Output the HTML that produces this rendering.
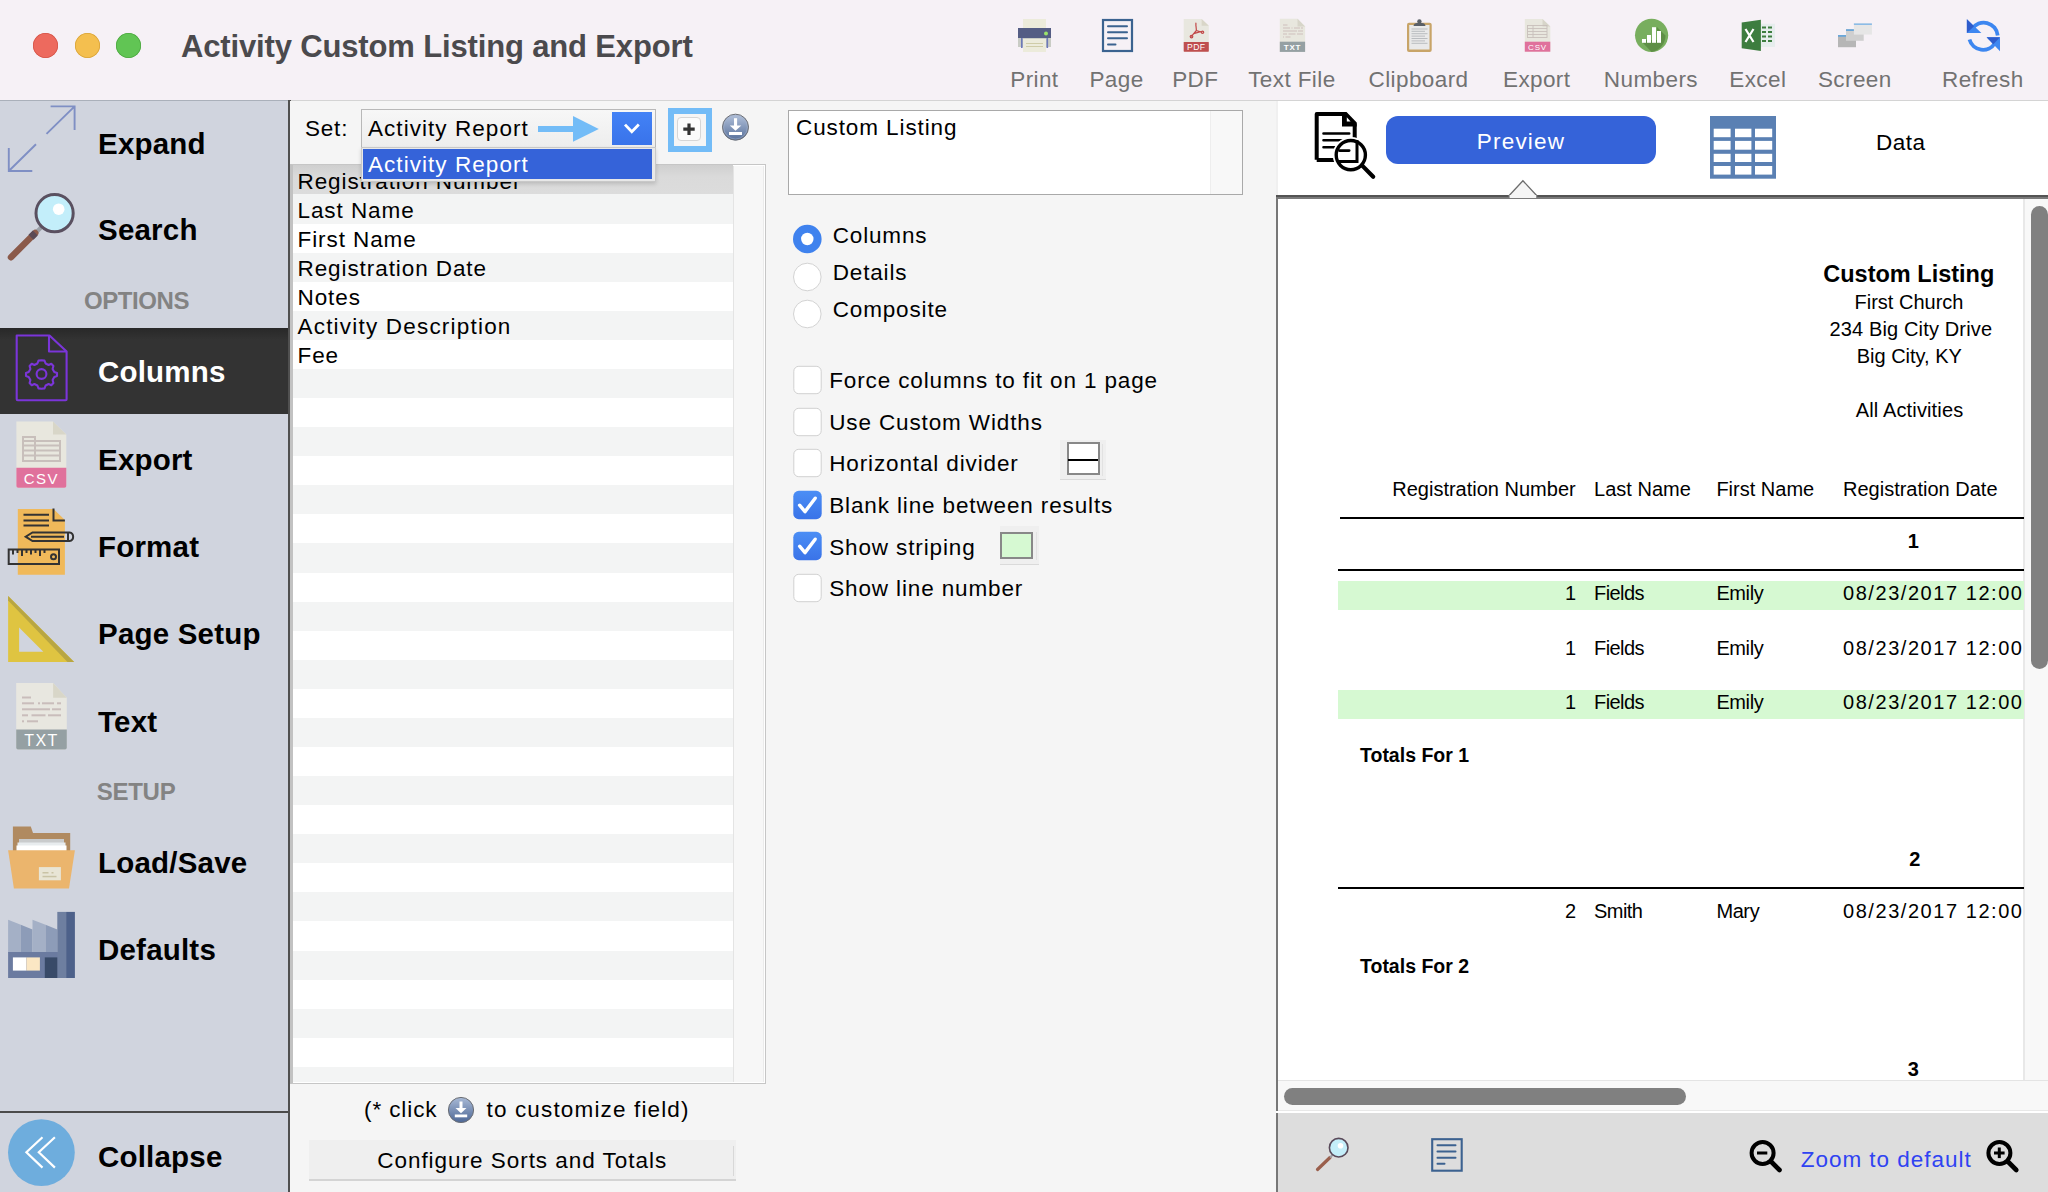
<!DOCTYPE html>
<html><head><meta charset="utf-8"><style>
html,body{margin:0;padding:0;}
body{width:2048px;height:1192px;position:relative;overflow:hidden;background:#f5f5f5;font-family:"Liberation Sans",sans-serif;}
.t{position:absolute;white-space:pre;}
.r{position:absolute;}
</style></head><body>
<div class="r" style="left:0px;top:0px;width:2048px;height:100px;background:#f6f1f6;"></div>
<div class="r" style="left:0px;top:100px;width:288px;height:1.5px;background:#aab0ba;"></div>
<div class="r" style="left:290px;top:100px;width:1758px;height:1.5px;background:#d4d4d4;"></div>
<div class="r" style="left:33.0px;top:33px;width:25px;height:25px;border-radius:50%;background:#ed6a5e;box-shadow:inset 0 0 0 0.8px #d5564a;"></div>
<div class="r" style="left:75.0px;top:33px;width:25px;height:25px;border-radius:50%;background:#f4bf4f;box-shadow:inset 0 0 0 0.8px #d9a43a;"></div>
<div class="r" style="left:116.0px;top:33px;width:25px;height:25px;border-radius:50%;background:#61c554;box-shadow:inset 0 0 0 0.8px #4ea842;"></div>
<div class="t" style="left:181px;top:31.00px;font-size:31px;line-height:31px;color:#4b4a4d;font-weight:bold;letter-spacing:-0.15px;">Activity Custom Listing and Export</div>
<div class="t" style="left:934.4000000000001px;width:200px;text-align:center;top:69.00px;font-size:22.5px;line-height:22.5px;color:#727272;letter-spacing:0.4px;">Print</div>
<div class="t" style="left:1016.5px;width:200px;text-align:center;top:69.00px;font-size:22.5px;line-height:22.5px;color:#727272;letter-spacing:0.4px;">Page</div>
<div class="t" style="left:1095.3px;width:200px;text-align:center;top:69.00px;font-size:22.5px;line-height:22.5px;color:#727272;letter-spacing:0.4px;">PDF</div>
<div class="t" style="left:1191.9px;width:200px;text-align:center;top:69.00px;font-size:22.5px;line-height:22.5px;color:#727272;letter-spacing:0.4px;">Text File</div>
<div class="t" style="left:1318.5px;width:200px;text-align:center;top:69.00px;font-size:22.5px;line-height:22.5px;color:#727272;letter-spacing:0.4px;">Clipboard</div>
<div class="t" style="left:1436.7px;width:200px;text-align:center;top:69.00px;font-size:22.5px;line-height:22.5px;color:#727272;letter-spacing:0.4px;">Export</div>
<div class="t" style="left:1550.9px;width:200px;text-align:center;top:69.00px;font-size:22.5px;line-height:22.5px;color:#727272;letter-spacing:0.4px;">Numbers</div>
<div class="t" style="left:1657.8px;width:200px;text-align:center;top:69.00px;font-size:22.5px;line-height:22.5px;color:#727272;letter-spacing:0.4px;">Excel</div>
<div class="t" style="left:1754.8px;width:200px;text-align:center;top:69.00px;font-size:22.5px;line-height:22.5px;color:#727272;letter-spacing:0.4px;">Screen</div>
<div class="t" style="left:1882.8px;width:200px;text-align:center;top:69.00px;font-size:22.5px;line-height:22.5px;color:#727272;letter-spacing:0.4px;">Refresh</div>
<svg class="r" style="left:1016px;top:17px;" width="38" height="36" viewBox="0 0 38 36">
<rect x="7" y="2" width="23" height="10" fill="#ecebdb"/>
<rect x="2" y="11" width="33" height="10" fill="#545d84"/>
<circle cx="30" cy="16.4" r="2" fill="#9be36a"/>
<rect x="2" y="21" width="33" height="9" fill="#c9ccc5"/>
<rect x="5" y="21" width="1.6" height="10" fill="#6d79b8"/>
<rect x="30.5" y="21" width="1.6" height="10" fill="#6d79b8"/>
<rect x="7" y="22" width="23" height="13" fill="#ecebdb"/>
<rect x="10" y="26" width="17" height="1" fill="#cfcca8"/>
<rect x="10" y="29" width="17" height="1" fill="#cfcca8"/>
</svg>
<svg class="r" style="left:1100px;top:17px;" width="36" height="38" viewBox="0 0 36 38">
<rect x="3" y="3" width="29" height="31" fill="none" stroke="#3b6390" stroke-width="2.2"/>
<rect x="7" y="8.3" width="21" height="2" rx="1" fill="#3b6390"/>
<rect x="7" y="14.3" width="21" height="2" rx="1" fill="#3b6390"/>
<rect x="7" y="20.3" width="21" height="2" rx="1" fill="#3b6390"/>
<rect x="7" y="26.5" width="9.5" height="2" rx="1" fill="#3b6390"/>
</svg>
<svg class="r" style="left:1183px;top:18px;" width="28" height="36" viewBox="0 0 28 36">
<path d="M0.7 1.1 H18.6 L25.8 7.7 V33.7 H0.7 Z" fill="#e8e7df"/>
<path d="M18.6 1.1 L25.8 7.7 H18.6 Z" fill="#d9d6c8"/>
<rect x="0.7" y="24" width="25.1" height="9.7" rx="0.6" fill="#bf4f4f"/>
<text x="13.2" y="31.9" font-size="8.6" font-family="Liberation Sans" fill="#fff" text-anchor="middle" letter-spacing="0.4">PDF</text>
<g stroke="#c24848" stroke-width="1.2" fill="none" stroke-linecap="round">
<path d="M12.9 5.2 V8 M13 8 L13.4 12.5 L8.6 18.2 M13.4 12.5 L19 14.2 M10.8 15.6 L17.5 13.6"/>
<circle cx="8.5" cy="18.6" r="1.3"/><circle cx="19.5" cy="14.3" r="1.2"/>
</g>
</svg>
<svg class="r" style="left:1279px;top:18px;" width="28" height="36" viewBox="0 0 28 36">
<path d="M0.8 0.8 H18.5 L26.1 8.5 V33.9 H0.8 Z" fill="#e8e7de"/>
<path d="M18.5 0.8 L26.1 8.5 H18.5 Z" fill="#d7d5c9"/>
<rect x="0.8" y="23.7" width="25.3" height="10.2" fill="#95a0a3"/>
<text x="13.5" y="32.4" font-size="8" font-family="Liberation Sans" font-weight="bold" fill="#fff" text-anchor="middle" letter-spacing="0.8">TXT</text>
<g fill="#cdbfbc"><rect x="4" y="6.5" width="4.5" height="1"/><rect x="4" y="9.5" width="7" height="1"/><rect x="12.5" y="9.5" width="1" height="1"/><rect x="15" y="9.5" width="6" height="1"/><rect x="22" y="9.5" width="2" height="1"/>
<rect x="4" y="12.5" width="14" height="1"/><rect x="19" y="12.5" width="5" height="1"/><rect x="4" y="15.5" width="4" height="1"/><rect x="9.5" y="15.5" width="7" height="1"/><rect x="18" y="15.5" width="6" height="1"/><rect x="4" y="18.5" width="1" height="1"/><rect x="6.5" y="18.5" width="5" height="1"/></g>
</svg>
<svg class="r" style="left:1405px;top:17px;" width="29" height="37" viewBox="0 0 29 37">
<rect x="2" y="5.8" width="24.7" height="29.1" rx="2" fill="#c8a468"/>
<rect x="4.2" y="8" width="20.3" height="24.5" fill="#e9e9e9"/>
<path d="M8.5 9 Q9 6 12 6 H17 Q20 6 20.5 9 Z" fill="#5a5f66"/>
<circle cx="14.4" cy="4.5" r="2.2" fill="#5a5f66"/>
<g fill="#b9bcbf"><rect x="6.5" y="11.5" width="16" height="1"/><rect x="6.5" y="13.8" width="13.5" height="1"/><rect x="6.5" y="16.2" width="16" height="1"/><rect x="6.5" y="18.6" width="13.5" height="1"/><rect x="6.5" y="21" width="16" height="1"/><rect x="6.5" y="23.4" width="13.5" height="1"/><rect x="6.5" y="25.8" width="16" height="1"/></g>
</svg>
<svg class="r" style="left:1524px;top:18px;" width="28" height="36" viewBox="0 0 28 36">
<path d="M0.8 0.9 H18.5 L26.3 8.6 V33.7 H0.8 Z" fill="#e8e7de"/>
<path d="M18.5 0.9 L26.3 8.6 H18.5 Z" fill="#d7d5c9"/>
<rect x="0.8" y="23.7" width="25.5" height="10" fill="#e0719c"/>
<text x="13.5" y="32.2" font-size="8" font-family="Liberation Sans" fill="#fff" text-anchor="middle" letter-spacing="0.8">CSV</text>
<g fill="none" stroke="#c8bfbb" stroke-width="0.9"><rect x="3.5" y="7.5" width="19.5" height="12"/><path d="M9 7.5 V19.5 M3.5 10.5 H23 M3.5 13.5 H23 M3.5 16.5 H23"/></g>
</svg>
<svg class="r" style="left:1634px;top:18px;" width="36" height="36" viewBox="0 0 36 36">
<circle cx="17.6" cy="17.3" r="16.6" fill="#78ae5e"/>
<path d="M8 22 L23 22 L23 9 L31.5 17.5 A16.6 16.6 0 0 1 17.6 33.9 L8 24 Z" fill="#5f8f47"/>
<rect x="8" y="21" width="4" height="3.8" fill="#fff"/>
<rect x="13" y="17" width="4" height="7.8" fill="#fff"/>
<rect x="18" y="9.2" width="4" height="15.6" fill="#fff"/>
<rect x="23" y="13" width="4" height="11.8" fill="#fff"/>
</svg>
<svg class="r" style="left:1740px;top:18px;" width="38" height="36" viewBox="0 0 38 36">
<rect x="19" y="5.7" width="16" height="23.2" fill="#e6eded"/>
<g fill="#3d7d3f"><rect x="22" y="8.5" width="4" height="2"/><rect x="28" y="8.5" width="4" height="2"/><rect x="22" y="13" width="4" height="2"/><rect x="28" y="13" width="4" height="2"/><rect x="22" y="17.5" width="4" height="2"/><rect x="28" y="17.5" width="4" height="2"/><rect x="22" y="22" width="4" height="2"/><rect x="28" y="22" width="4" height="2"/></g>
<path d="M1.7 4.5 L20.9 1.8 V33 L1.7 30.3 Z" fill="#3d7d3f"/>
<path d="M5.5 11 L13.5 24 M13.5 11 L5.5 24" stroke="#fff" stroke-width="2.2"/>
</svg>
<svg class="r" style="left:1836px;top:20px;" width="40" height="30" viewBox="0 0 40 30">
<rect x="2" y="15" width="18" height="12.2" fill="#b6b6b6"/><rect x="2" y="15" width="18" height="1.8" fill="#6aa6d8"/>
<rect x="10" y="9.2" width="17.7" height="11.6" fill="#cfcfcf"/><rect x="10" y="9.2" width="17.7" height="1.8" fill="#6aa6d8"/>
<rect x="17.9" y="3.4" width="18" height="11.2" fill="#e6e6e6"/><rect x="17.9" y="3.4" width="18" height="1.6" fill="#8bbbe6"/>
</svg>
<svg class="r" style="left:1964px;top:17px;" width="40" height="38" viewBox="0 0 40 38">
<path d="M33.7 18.5 A14 14 0 0 0 8 12" fill="none" stroke="#3d87f0" stroke-width="3.8"/>
<path d="M5.5 22.5 A14 14 0 0 0 31 26" fill="none" stroke="#3d87f0" stroke-width="3.8"/>
<path d="M2.9 2.3 V16 H17.4 Z" fill="#3d87f0"/><path d="M2.9 2.3 V16 L10 9.2 Z" fill="#2e5ccc"/>
<path d="M36 34.3 V20.3 H22.6 Z" fill="#3d87f0"/><path d="M36 20.3 H22.6 L29.3 27.2 Z" fill="#2e5ccc"/>
</svg>
<div class="r" style="left:0px;top:101px;width:288px;height:1091px;background:#d0d4de;"></div>
<div class="r" style="left:288px;top:100px;width:2.5px;height:1092px;background:#505050;"></div>
<div class="r" style="left:0px;top:328px;width:288px;height:86px;background:#333333;background:linear-gradient(#282828,#333 12px,#333);"></div>
<div class="r" style="left:0px;top:1111px;width:288px;height:2px;background:#4b4b4b;"></div>
<div class="t" style="left:98px;top:129.00px;font-size:29.5px;line-height:29.5px;color:#000;font-weight:bold;letter-spacing:0.2px;">Expand</div>
<div class="t" style="left:98px;top:215.00px;font-size:29.5px;line-height:29.5px;color:#000;font-weight:bold;letter-spacing:0.2px;">Search</div>
<div class="t" style="left:11.5px;width:250px;text-align:center;top:289.00px;font-size:24px;line-height:24px;color:#838383;font-weight:bold;letter-spacing:-0.4px;">OPTIONS</div>
<div class="t" style="left:98px;top:357.00px;font-size:29.5px;line-height:29.5px;color:#fff;font-weight:bold;letter-spacing:0.2px;">Columns</div>
<div class="t" style="left:98px;top:445.00px;font-size:29.5px;line-height:29.5px;color:#000;font-weight:bold;letter-spacing:0.2px;">Export</div>
<div class="t" style="left:98px;top:532.00px;font-size:29.5px;line-height:29.5px;color:#000;font-weight:bold;letter-spacing:0.2px;">Format</div>
<div class="t" style="left:98px;top:619.00px;font-size:29.5px;line-height:29.5px;color:#000;font-weight:bold;letter-spacing:0.2px;">Page Setup</div>
<div class="t" style="left:98px;top:707.00px;font-size:29.5px;line-height:29.5px;color:#000;font-weight:bold;letter-spacing:0.2px;">Text</div>
<div class="t" style="left:11.099999999999994px;width:250px;text-align:center;top:780.00px;font-size:24px;line-height:24px;color:#838383;font-weight:bold;letter-spacing:-0.3px;">SETUP</div>
<div class="t" style="left:98px;top:848.00px;font-size:29.5px;line-height:29.5px;color:#000;font-weight:bold;letter-spacing:0.2px;">Load/Save</div>
<div class="t" style="left:98px;top:935.00px;font-size:29.5px;line-height:29.5px;color:#000;font-weight:bold;letter-spacing:0.2px;">Defaults</div>
<div class="t" style="left:98px;top:1142.00px;font-size:29.5px;line-height:29.5px;color:#000;font-weight:bold;letter-spacing:0.2px;">Collapse</div>
<svg class="r" style="left:0px;top:100px;" width="90" height="80" viewBox="0 0 90 80">
<g stroke="#7f8fc4" stroke-width="1.9" fill="none" stroke-linecap="butt">
<path d="M46.5 33.9 L74.6 6.4 M50.6 6.4 H74.6 V30"/>
<path d="M36 44.2 L8.8 71 M8.8 48 V71 H32.3"/>
</g></svg>
<svg class="r" style="left:0px;top:180px;" width="90" height="90" viewBox="0 0 90 90">
<path d="M35.5 53 L41.5 47" stroke="#9aa0a8" stroke-width="4"/>
<path d="M11 77.2 L35.2 53" stroke="#8b5a4a" stroke-width="6.5" stroke-linecap="round"/>
<path d="M31 57.3 L35.3 53" stroke="#5b4a55" stroke-width="7"/>
<circle cx="54.6" cy="33.2" r="18.6" fill="#c3eefa" stroke="#5a5060" stroke-width="3"/>
<circle cx="58.7" cy="29.2" r="5.8" fill="#fff"/>
</svg>
<svg class="r" style="left:0px;top:320px;" width="90" height="90" viewBox="0 0 90 90">
<g stroke="#7b35d9" stroke-width="2.1" fill="none" stroke-linejoin="round">
<path d="M16.7 15.5 H49.5 L66.6 31.5 V79.2 Q66.6 80.2 65.6 80.2 H17.7 Q16.7 80.2 16.7 79.2 Z"/>
<path d="M49 15.5 V31.5 H66.6"/>
<circle cx="41.5" cy="54" r="4.9"/>
<path d="M41.5 40.2 L44.5 40.6 L45.6 43.5 L48.6 45 L51.3 43.8 L53.4 46 L52.6 49 L54.3 52 L57 53 L57 56 L54.3 57 L52.6 60 L53.4 63 L51.3 65.2 L48.6 64 L45.6 65.5 L44.5 68.4 L41.5 68.8 L38.5 68.4 L37.4 65.5 L34.4 64 L31.7 65.2 L29.6 63 L30.4 60 L28.7 57 L26 56 L26 53 L28.7 52 L30.4 49 L29.6 46 L31.7 43.8 L34.4 45 L37.4 43.5 L38.5 40.6 Z"/>
</g></svg>
<svg class="r" style="left:0px;top:415px;" width="90" height="80" viewBox="0 0 90 80">
<path d="M16.4 6.4 H53 L66.3 19.5 V71 Q66.3 72.7 64.6 72.7 H18.1 Q16.4 72.7 16.4 71 Z" fill="#e8e7de"/>
<path d="M53 6.4 L66.3 19.5 H53 Z" fill="#d8d6c8"/>
<path d="M16.4 52.8 H66.3 V71 Q66.3 72.7 64.6 72.7 H18.1 Q16.4 72.7 16.4 71 Z" fill="#e0719c"/>
<text x="41.3" y="68.5" font-size="15" font-family="Liberation Sans" fill="#fff" text-anchor="middle" letter-spacing="1.5">CSV</text>
<g fill="none" stroke="#c8bfbb" stroke-width="2"><path d="M23 22 H35 V46 H23 Z M35 26 H60 V46 H35 M23 30.5 H60 M23 35.5 H60 M23 40.5 H60 M23 26 H35"/></g>
</svg>
<svg class="r" style="left:0px;top:500px;" width="90" height="80" viewBox="0 0 90 80">
<path d="M17.8 8.9 H53.5 L64.9 20 V74.8 H17.8 Z" fill="#f0b95a"/>
<g stroke="#333" stroke-width="2" fill="none">
<path d="M53.5 8.5 V20.5 H64.9"/>
<path d="M23.5 14.8 H49 M23.5 20.4 H49 M23.5 25.6 H49"/>
<path d="M32.5 32.5 H69.5 A4.3 4.3 0 0 1 69.5 41 H32.5 L25.7 36.7 Z M31 36.8 H64 M68 32.5 V41"/>
<rect x="8.7" y="49.5" width="50.3" height="14.5"/>
<path d="M13 50 V54.5 M17.5 50 V53 M22 50 V56 M26.5 50 V53 M31 50 V54.5 M35.5 50 V53 M40 50 V56 M44.5 50 V53"/>
<circle cx="53.5" cy="56.8" r="2.5"/>
</g></svg>
<svg class="r" style="left:0px;top:590px;" width="90" height="80" viewBox="0 0 90 80">
<path d="M8.1 6 V72.1 H74.1 Z" fill="#dfc441"/>
<path d="M8.1 6 V10.5 L67.5 72.1 H74.1 Z" fill="#b8a642"/>
<path d="M19.1 37.6 V61.8 H43.3 Z" fill="#d0d4de"/>
</svg>
<svg class="r" style="left:0px;top:675px;" width="90" height="80" viewBox="0 0 90 80">
<path d="M16.2 8.1 H53.1 L66.8 22.8 V72.7 Q66.8 74.4 65.1 74.4 H17.9 Q16.2 74.4 16.2 72.7 Z" fill="#e8e7e0"/>
<path d="M53.1 8.1 L66.8 22.8 H53.1 Z" fill="#d8d6c8"/>
<path d="M16.2 54.6 H66.8 V72.7 Q66.8 74.4 65.1 74.4 H17.9 Q16.2 74.4 16.2 72.7 Z" fill="#95a0a3"/>
<text x="41.5" y="71.2" font-size="16" font-family="Liberation Sans" fill="#fff" text-anchor="middle" letter-spacing="1.5">TXT</text>
<g fill="#c9bdbb"><rect x="22" y="21.5" width="9" height="2"/><rect x="22" y="27.3" width="12" height="2"/><rect x="38" y="27.3" width="2" height="2"/><rect x="42" y="27.3" width="12" height="2"/><rect x="57" y="27.3" width="4" height="2"/><rect x="22" y="33.3" width="28" height="2"/><rect x="52" y="33.3" width="9" height="2"/><rect x="22" y="39.3" width="6" height="2"/><rect x="31.5" y="39.3" width="14" height="2"/><rect x="48" y="39.3" width="13" height="2"/><rect x="22" y="45.3" width="2" height="2"/><rect x="27" y="45.3" width="11" height="2"/></g>
</svg>
<svg class="r" style="left:0px;top:815px;" width="90" height="80" viewBox="0 0 90 80">
<path d="M12.9 11.5 H30.8 L33 17.9 H70.2 V36 H12.9 Z" fill="#b08a60"/>
<rect x="19" y="24" width="45" height="10" fill="#c9cbcc"/>
<rect x="17.5" y="27.5" width="48" height="8" fill="#e8ecee"/>
<rect x="16.5" y="30.5" width="50" height="8" fill="#fff"/>
<path d="M8.1 35.2 H74.9 L69 73.4 H13.9 Z" fill="#ebb56d"/>
<rect x="38.9" y="52.1" width="22" height="13.2" fill="#e8e5d5"/>
<rect x="42.5" y="57" width="6" height="1.5" fill="#c9c3a5"/><rect x="51.5" y="57" width="2" height="1.5" fill="#c9c3a5"/><rect x="42.5" y="60.8" width="14" height="1.5" fill="#c9c3a5"/>
</svg>
<svg class="r" style="left:0px;top:900px;" width="90" height="85" viewBox="0 0 90 85">
<path d="M8.1 19.7 L20.8 24.8 V53 H8.1 Z" fill="#a4b0c6"/>
<path d="M20.8 24.8 L32.5 29.5 V53 H20.8 Z" fill="#8d9cb8"/>
<path d="M32.5 19.7 L45.5 24.8 V53 H32.5 Z" fill="#a4b0c6"/>
<path d="M45.5 24.8 L57.3 29.5 V53 H45.5 Z" fill="#8d9cb8"/>
<rect x="8.1" y="52" width="50" height="26" fill="#6b7ba0"/>
<rect x="57.3" y="11.9" width="8.8" height="66.1" fill="#6e7fa0"/>
<rect x="66.1" y="11.9" width="8.8" height="66.1" fill="#4d618a"/>
<rect x="12.9" y="57.4" width="13.5" height="13.2" fill="#fff"/>
<rect x="26.4" y="57.4" width="13.5" height="13.2" fill="#fbe7c4"/>
<rect x="44.8" y="57.4" width="12.5" height="20.6" fill="#384a68"/>
</svg>
<svg class="r" style="left:0px;top:1110px;" width="90" height="82" viewBox="0 0 90 82">
<circle cx="41.4" cy="42.6" r="33.4" fill="#6eaddd"/>
<path d="M42.5 27.2 L26.4 42.3 L42.5 57.6 M54.9 27.2 L38.8 42.3 L54.9 57.6" stroke="#fff" stroke-width="2.2" fill="none"/>
</svg>
<div class="r" style="left:290px;top:101px;width:988px;height:1091px;background:#f5f5f5;"></div>
<div class="t" style="left:305px;top:118.00px;font-size:22.5px;line-height:22.5px;color:#000;letter-spacing:0.8px;">Set:</div>
<div class="r" style="left:361px;top:108.5px;width:295px;height:40px;background:#f3f3f3;box-sizing:border-box;border:1.5px solid #b8b8b8;background:linear-gradient(#f7f7f7,#ededed);"></div>
<div class="t" style="left:368px;top:118.00px;font-size:22.5px;line-height:22.5px;color:#000;letter-spacing:1.05px;">Activity Report</div>
<svg class="r" style="left:536px;top:114px;" width="66" height="30" viewBox="0 0 66 30"><rect x="2" y="12" width="37" height="6" fill="#73bcf7"/><path d="M37 2 L62.8 14.9 L37 27.8 Z" fill="#73bcf7"/></svg>
<div class="r" style="left:612px;top:112px;width:40px;height:33px;background:#3d7cf2;background:linear-gradient(#4382f6,#3973ea);"></div>
<svg class="r" style="left:612px;top:112px;" width="40" height="33" viewBox="0 0 40 33"><path d="M13 12.6 L19.8 19.8 L26.8 12.6" stroke="#fff" stroke-width="2.8" fill="none"/></svg>
<div class="r" style="left:668px;top:108px;width:44px;height:44px;background:#73bcf7;"></div>
<div class="r" style="left:674px;top:114px;width:32px;height:32px;background:#f5f5f5;"></div>
<div class="r" style="left:677px;top:116.5px;width:24px;height:24px;background:#fbfbfb;box-sizing:border-box;border:1px solid #d6d6d6;border-radius:4px;"></div>
<svg class="r" style="left:677px;top:116.5px;" width="24" height="24" viewBox="0 0 24 24"><path d="M12 6.5 V18 M6.3 12.2 H17.7" stroke="#333" stroke-width="3.2"/></svg>
<svg class="r" style="left:720px;top:112px;" width="32" height="32" viewBox="0 0 32 32"><defs><linearGradient id="dg" x1="0" y1="0" x2="0" y2="1"><stop offset="0" stop-color="#b3c2db"/><stop offset="1" stop-color="#57709a"/></linearGradient></defs>
<circle cx="15.5" cy="15.2" r="13" fill="url(#dg)" stroke="#6b6e74" stroke-width="1"/>
<circle cx="15.5" cy="15.2" r="11.8" fill="none" stroke="#a9b6cc" stroke-width="0.8" opacity="0.6"/>
<rect x="14" y="6.2" width="3.1" height="8" fill="#fff"/>
<path d="M9.8 13.4 H21.3 L15.5 18.8 Z" fill="#fff"/>
<rect x="9" y="20" width="13" height="3" fill="#fff"/></svg>
<div class="r" style="left:290px;top:164px;width:476px;height:920px;background:#fff;box-sizing:border-box;border:1.7px solid #c6c6c6;border-left:3px solid #c2c2c2;"></div>
<div class="r" style="left:293px;top:165.40px;width:440px;height:29.08px;background:linear-gradient(#cfcfcf,#dadada 40%,#dcdcdc);"></div>
<div class="r" style="left:293px;top:194.48px;width:440px;height:29.08px;background:#f3f4f4;"></div>
<div class="r" style="left:293px;top:252.64px;width:440px;height:29.08px;background:#f3f4f4;"></div>
<div class="r" style="left:293px;top:310.8px;width:440px;height:29.08px;background:#f3f4f4;"></div>
<div class="r" style="left:293px;top:368.96px;width:440px;height:29.08px;background:#f3f4f4;"></div>
<div class="r" style="left:293px;top:427.12px;width:440px;height:29.08px;background:#f3f4f4;"></div>
<div class="r" style="left:293px;top:485.28px;width:440px;height:29.08px;background:#f3f4f4;"></div>
<div class="r" style="left:293px;top:543.44px;width:440px;height:29.08px;background:#f3f4f4;"></div>
<div class="r" style="left:293px;top:601.6px;width:440px;height:29.08px;background:#f3f4f4;"></div>
<div class="r" style="left:293px;top:659.76px;width:440px;height:29.08px;background:#f3f4f4;"></div>
<div class="r" style="left:293px;top:717.92px;width:440px;height:29.08px;background:#f3f4f4;"></div>
<div class="r" style="left:293px;top:776.08px;width:440px;height:29.08px;background:#f3f4f4;"></div>
<div class="r" style="left:293px;top:834.24px;width:440px;height:29.08px;background:#f3f4f4;"></div>
<div class="r" style="left:293px;top:892.4px;width:440px;height:29.08px;background:#f3f4f4;"></div>
<div class="r" style="left:293px;top:950.56px;width:440px;height:29.08px;background:#f3f4f4;"></div>
<div class="r" style="left:293px;top:1008.72px;width:440px;height:29.08px;background:#f3f4f4;"></div>
<div class="r" style="left:293px;top:1066.88px;width:440px;height:15.12px;background:#f3f4f4;"></div>
<div class="t" style="left:297.5px;top:171.00px;font-size:22.5px;line-height:22.5px;color:#000;letter-spacing:0.92px;">Registration Number</div>
<div class="t" style="left:297.5px;top:200.00px;font-size:22.5px;line-height:22.5px;color:#000;letter-spacing:0.92px;">Last Name</div>
<div class="t" style="left:297.5px;top:229.00px;font-size:22.5px;line-height:22.5px;color:#000;letter-spacing:0.92px;">First Name</div>
<div class="t" style="left:297.5px;top:258.00px;font-size:22.5px;line-height:22.5px;color:#000;letter-spacing:0.92px;">Registration Date</div>
<div class="t" style="left:297.5px;top:287.00px;font-size:22.5px;line-height:22.5px;color:#000;letter-spacing:0.92px;">Notes</div>
<div class="t" style="left:297.5px;top:316.00px;font-size:22.5px;line-height:22.5px;color:#000;letter-spacing:1.2px;">Activity Description</div>
<div class="t" style="left:297.5px;top:345.00px;font-size:22.5px;line-height:22.5px;color:#000;letter-spacing:0.92px;">Fee</div>
<div class="r" style="left:732.5px;top:165.5px;width:31.5px;height:916.5px;background:#f7f7f7;box-sizing:border-box;border-left:1.5px solid #e4e4e4;border-right:1px solid #ebebeb;"></div>
<div class="r" style="left:361px;top:147px;width:295px;height:34.5px;background:#e8e8e8;box-sizing:border-box;border:1.5px solid #c8c8c8;box-shadow:0 2px 4px rgba(0,0,0,0.15);"></div>
<div class="r" style="left:363px;top:149px;width:289px;height:29.5px;background:#3563d9;"></div>
<div class="t" style="left:368px;top:154.00px;font-size:22.5px;line-height:22.5px;color:#fff;letter-spacing:1.05px;">Activity Report</div>
<div class="t" style="left:364px;top:1099.00px;font-size:22.5px;line-height:22.5px;color:#000;letter-spacing:0.9px;">(* click</div>
<svg class="r" style="left:446px;top:1095px;" width="30" height="30" viewBox="0 0 30 30"><defs><linearGradient id="dg2" x1="0" y1="0" x2="0" y2="1"><stop offset="0" stop-color="#a9bad6"/><stop offset="1" stop-color="#4d6796"/></linearGradient></defs>
<circle cx="15" cy="15" r="12.6" fill="url(#dg2)" stroke="#6b6e74" stroke-width="1"/>
<rect x="13.5" y="6.5" width="3" height="7.5" fill="#fff"/>
<path d="M9.5 13 H20.5 L15 18.3 Z" fill="#fff"/>
<rect x="8.8" y="19.5" width="12.4" height="2.8" fill="#fff"/></svg>
<div class="t" style="left:486.5px;top:1099.00px;font-size:22.5px;line-height:22.5px;color:#000;letter-spacing:1.15px;">to customize field)</div>
<div class="r" style="left:309px;top:1140px;width:427px;height:41px;background:#efefef;box-sizing:border-box;border-bottom:2px solid #d4d4d4;"></div>
<div class="r" style="left:733px;top:1146px;width:1.2px;height:30px;background:#d8d8d8;"></div>
<div class="t" style="left:312.20000000000005px;width:420px;text-align:center;top:1150.00px;font-size:22.5px;line-height:22.5px;color:#000;letter-spacing:0.97px;">Configure Sorts and Totals</div>
<div class="r" style="left:788px;top:110px;width:454.5px;height:84.5px;background:#fff;box-sizing:border-box;border:1px solid #a9a9a9;"></div>
<div class="r" style="left:1210px;top:111px;width:31px;height:82.5px;background:#f8f8f8;border-left:1px solid #eeeeee;"></div>
<div class="t" style="left:796px;top:117.00px;font-size:22.5px;line-height:22.5px;color:#000;letter-spacing:0.9px;">Custom Listing</div>
<svg class="r" style="left:790px;top:222.3px;" width="34" height="34" viewBox="0 0 34 34"><circle cx="17.3" cy="17" r="14.3" fill="#3f82ee"/><circle cx="17.3" cy="17" r="6.2" fill="#fff"/></svg>
<svg class="r" style="left:790px;top:260.2px;" width="34" height="34" viewBox="0 0 34 34"><circle cx="17.3" cy="17" r="13.8" fill="#fff" stroke="#d3d3d3" stroke-width="1"/></svg>
<svg class="r" style="left:790px;top:297.2px;" width="34" height="34" viewBox="0 0 34 34"><circle cx="17.3" cy="17" r="13.8" fill="#fff" stroke="#d3d3d3" stroke-width="1"/></svg>
<div class="t" style="left:832.7px;top:225.00px;font-size:22.5px;line-height:22.5px;color:#000;letter-spacing:0.85px;">Columns</div>
<div class="t" style="left:832.7px;top:262.00px;font-size:22.5px;line-height:22.5px;color:#000;letter-spacing:0.85px;">Details</div>
<div class="t" style="left:832.7px;top:299.00px;font-size:22.5px;line-height:22.5px;color:#000;letter-spacing:0.85px;">Composite</div>
<svg class="r" style="left:791px;top:364.0px;" width="32" height="32" viewBox="0 0 32 32"><rect x="2.8" y="2.3" width="27.4" height="27.4" rx="5" fill="#fff" stroke="#d0d0d0" stroke-width="1"/></svg>
<div class="t" style="left:829.2px;top:370.00px;font-size:22.5px;line-height:22.5px;color:#000;letter-spacing:0.87px;">Force columns to fit on 1 page</div>
<svg class="r" style="left:791px;top:405.6px;" width="32" height="32" viewBox="0 0 32 32"><rect x="2.8" y="2.3" width="27.4" height="27.4" rx="5" fill="#fff" stroke="#d0d0d0" stroke-width="1"/></svg>
<div class="t" style="left:829.2px;top:412.00px;font-size:22.5px;line-height:22.5px;color:#000;letter-spacing:0.87px;">Use Custom Widths</div>
<svg class="r" style="left:791px;top:447.2px;" width="32" height="32" viewBox="0 0 32 32"><rect x="2.8" y="2.3" width="27.4" height="27.4" rx="5" fill="#fff" stroke="#d0d0d0" stroke-width="1"/></svg>
<div class="t" style="left:829.2px;top:453.00px;font-size:22.5px;line-height:22.5px;color:#000;letter-spacing:0.87px;">Horizontal divider</div>
<svg class="r" style="left:791px;top:488.8px;" width="32" height="32" viewBox="0 0 32 32"><defs><linearGradient id="cg" x1="0" y1="0" x2="0" y2="1"><stop offset="0" stop-color="#4b8ef5"/><stop offset="1" stop-color="#3a73e8"/></linearGradient></defs>
<rect x="2.3" y="1.8" width="28.4" height="28.4" rx="5.5" fill="url(#cg)"/>
<path d="M8.6 16.2 L14 22.6 L24.2 9.2" stroke="#fff" stroke-width="3.4" fill="none" stroke-linecap="round" stroke-linejoin="round"/></svg>
<div class="t" style="left:829.2px;top:495.00px;font-size:22.5px;line-height:22.5px;color:#000;letter-spacing:0.87px;">Blank line between results</div>
<svg class="r" style="left:791px;top:530.4px;" width="32" height="32" viewBox="0 0 32 32"><defs><linearGradient id="cg" x1="0" y1="0" x2="0" y2="1"><stop offset="0" stop-color="#4b8ef5"/><stop offset="1" stop-color="#3a73e8"/></linearGradient></defs>
<rect x="2.3" y="1.8" width="28.4" height="28.4" rx="5.5" fill="url(#cg)"/>
<path d="M8.6 16.2 L14 22.6 L24.2 9.2" stroke="#fff" stroke-width="3.4" fill="none" stroke-linecap="round" stroke-linejoin="round"/></svg>
<div class="t" style="left:829.2px;top:537.00px;font-size:22.5px;line-height:22.5px;color:#000;letter-spacing:0.87px;">Show striping</div>
<svg class="r" style="left:791px;top:572.0px;" width="32" height="32" viewBox="0 0 32 32"><rect x="2.8" y="2.3" width="27.4" height="27.4" rx="5" fill="#fff" stroke="#d0d0d0" stroke-width="1"/></svg>
<div class="t" style="left:829.2px;top:578.00px;font-size:22.5px;line-height:22.5px;color:#000;letter-spacing:0.87px;">Show line number</div>
<div class="r" style="left:1060px;top:440px;width:46px;height:40px;background:#efefef;box-sizing:border-box;border-bottom:1.5px solid #dadada;"></div>
<div class="r" style="left:1102px;top:444px;width:1px;height:32px;background:#e2e2e2;"></div>
<div class="r" style="left:1066.5px;top:442px;width:33.5px;height:33px;background:#fff;box-sizing:border-box;border:2px solid #888;"></div>
<div class="r" style="left:1068px;top:459px;width:30px;height:2.2px;background:#000;"></div>
<div class="r" style="left:1000px;top:525.5px;width:39px;height:39px;background:#efefef;box-sizing:border-box;border-bottom:1.5px solid #dadada;"></div>
<div class="r" style="left:1036px;top:532px;width:1px;height:28px;background:#e2e2e2;"></div>
<div class="r" style="left:1000px;top:531.5px;width:33px;height:27px;background:#d6f9d2;box-sizing:border-box;border:2px solid #888;"></div>
<div class="r" style="left:1278px;top:101px;width:770px;height:95px;background:#ffffff;"></div>
<div class="r" style="left:1276px;top:101px;width:2px;height:96px;background:#f0f0f0;"></div>
<svg class="r" style="left:1308px;top:105px;" width="72" height="80" viewBox="0 0 72 80">
<path d="M8.7 54.8 V9 H36.6 L46.7 19.5 V40" fill="none" stroke="#000" stroke-width="4" stroke-linejoin="round"/>
<path d="M8.7 55 H28" stroke="#000" stroke-width="4"/>
<path d="M34 7 H38.5 L48.7 17.5 V21.5 H34 Z" fill="#000"/>
<path d="M38.8 12.3 L42.6 16.5 H38.8 Z" fill="#fff"/>
<g stroke="#000" stroke-width="2.6" stroke-linecap="round"><path d="M15.5 28.5 H41.2 M15.5 35.2 H41.2 M15.5 42.3 H28"/></g>
<circle cx="42.8" cy="50.1" r="14.5" fill="#fff" stroke="#fff" stroke-width="7"/>
<path d="M31.5 45.6 H41.2" stroke="#000" stroke-width="2.6" stroke-linecap="round"/>
<path d="M49 35 V56.5 H31" fill="none" stroke="#000" stroke-width="3"/>
<circle cx="42.8" cy="50.1" r="14.6" fill="none" stroke="#000" stroke-width="3.4"/>
<path d="M54 60.4 L65.2 71.8" stroke="#000" stroke-width="4.2" stroke-linecap="round"/>
</svg>
<div class="r" style="left:1386px;top:116px;width:270px;height:48px;background:#3563d9;border-radius:12px;"></div>
<div class="t" style="left:1386.0px;width:270px;text-align:center;top:131.00px;font-size:22.5px;line-height:22.5px;color:#fff;letter-spacing:1.2px;">Preview</div>
<svg class="r" style="left:1709px;top:115px;" width="68" height="65" viewBox="0 0 68 65">
<rect x="1" y="1" width="66" height="62.7" fill="#5a80b3"/>
<g fill="#fff">
<rect x="4.7" y="13.7" width="16.9" height="8.5"/><rect x="26" y="13.7" width="16.4" height="8.5"/><rect x="46" y="13.7" width="17.2" height="8.5"/>
<rect x="4.7" y="25.9" width="16.9" height="8.8"/><rect x="26" y="25.9" width="16.4" height="8.8"/><rect x="46" y="25.9" width="17.2" height="8.8"/>
<rect x="4.7" y="38.8" width="16.9" height="8.2"/><rect x="26" y="38.8" width="16.4" height="8.2"/><rect x="46" y="38.8" width="17.2" height="8.2"/>
<rect x="4.7" y="51" width="16.9" height="8.6"/><rect x="26" y="51" width="16.4" height="8.6"/><rect x="46" y="51" width="17.2" height="8.6"/>
</g></svg>
<div class="t" style="left:1876px;top:132.00px;font-size:22.5px;line-height:22.5px;color:#000;letter-spacing:0.5px;">Data</div>
<div class="r" style="left:1276px;top:195px;width:772px;height:3.5px;background:#676767;background:linear-gradient(#545454 50%,#7a7a7a 50%);"></div>
<svg class="r" style="left:1505px;top:178px;" width="36" height="22" viewBox="0 0 36 22"><path d="M3.5 18.2 L17.9 2.7 L32.3 18.2" fill="#f5f5f5" stroke="#6d6d6d" stroke-width="1.3"/><rect x="4.6" y="17" width="26.6" height="3" fill="#f5f5f5"/></svg>
<div class="r" style="left:1276px;top:198.5px;width:2px;height:994px;background:#777777;"></div>
<div class="r" style="left:1276px;top:1111px;width:2px;height:2px;background:#ffffff;"></div>
<div class="r" style="left:1278px;top:198.5px;width:746px;height:882px;background:#ffffff;"></div>
<div class="r" style="left:2023px;top:198.5px;width:2px;height:882px;background:#e8e8e8;"></div>
<div class="r" style="left:2025px;top:198.5px;width:23px;height:882px;background:#f8f8f8;"></div>
<div class="r" style="left:2031px;top:205.5px;width:17px;height:463px;background:#808080;border-radius:8.5px;"></div>
<div class="r" style="left:1278px;top:1080px;width:770px;height:31px;background:#f8f8f8;box-sizing:border-box;border-top:1.5px solid #e4e4e4;border-bottom:1.8px solid #e8e8e8;"></div>
<div class="r" style="left:1284.4px;top:1088px;width:401.6px;height:16.8px;background:#808080;border-radius:8.4px;"></div>
<div class="r" style="left:1278px;top:1111px;width:770px;height:2px;background:#ffffff;"></div>
<div class="r" style="left:1278px;top:1112.5px;width:770px;height:80px;background:#dddddd;"></div>
<div class="t" style="left:1758.8px;width:300px;text-align:center;top:263.00px;font-size:23.5px;line-height:23.5px;color:#000;font-weight:bold;">Custom Listing</div>
<div class="t" style="left:1759.0px;width:300px;text-align:center;top:292.00px;font-size:20px;line-height:20px;color:#000;">First Church</div>
<div class="t" style="left:1760.8px;width:300px;text-align:center;top:319.00px;font-size:20px;line-height:20px;color:#000;letter-spacing:0.15px;">234 Big City Drive</div>
<div class="t" style="left:1759.3px;width:300px;text-align:center;top:346.00px;font-size:20px;line-height:20px;color:#000;">Big City, KY</div>
<div class="t" style="left:1759.5px;width:300px;text-align:center;top:400.00px;font-size:20px;line-height:20px;color:#000;letter-spacing:0.15px;">All Activities</div>
<div class="t" style="left:1275.7px;width:300px;text-align:right;top:479.00px;font-size:20px;line-height:20px;color:#000;">Registration Number</div>
<div class="t" style="left:1594.1px;top:479.00px;font-size:20px;line-height:20px;color:#000;">Last Name</div>
<div class="t" style="left:1716.4px;top:479.00px;font-size:20px;line-height:20px;color:#000;">First Name</div>
<div class="t" style="left:1843px;top:479.00px;font-size:20px;line-height:20px;color:#000;">Registration Date</div>
<div class="r" style="left:1340px;top:517px;width:684px;height:2.4px;background:#000;"></div>
<div class="t" style="left:1893.2px;width:40px;text-align:center;top:531.00px;font-size:20px;line-height:20px;color:#000;font-weight:bold;">1</div>
<div class="r" style="left:1338px;top:569px;width:686px;height:2.4px;background:#000;"></div>
<div class="r" style="left:1338px;top:581.4px;width:686px;height:28.8px;background:#d6f9d2;"></div>
<div class="t" style="left:1536px;width:40px;text-align:right;top:583.00px;font-size:20px;line-height:20px;color:#000;">1</div>
<div class="t" style="left:1594.1px;top:583.00px;font-size:20px;line-height:20px;color:#000;letter-spacing:-0.6px;">Fields</div>
<div class="t" style="left:1716.4px;top:583.00px;font-size:20px;line-height:20px;color:#000;letter-spacing:-0.4px;">Emily</div>
<div class="t" style="left:1843px;top:583.00px;font-size:20px;line-height:20px;color:#000;letter-spacing:1.55px;">08/23/2017 12:00</div>
<div class="t" style="left:1536px;width:40px;text-align:right;top:638.00px;font-size:20px;line-height:20px;color:#000;">1</div>
<div class="t" style="left:1594.1px;top:638.00px;font-size:20px;line-height:20px;color:#000;letter-spacing:-0.6px;">Fields</div>
<div class="t" style="left:1716.4px;top:638.00px;font-size:20px;line-height:20px;color:#000;letter-spacing:-0.4px;">Emily</div>
<div class="t" style="left:1843px;top:638.00px;font-size:20px;line-height:20px;color:#000;letter-spacing:1.55px;">08/23/2017 12:00</div>
<div class="r" style="left:1338px;top:690.1px;width:686px;height:28.8px;background:#d6f9d2;"></div>
<div class="t" style="left:1536px;width:40px;text-align:right;top:692.00px;font-size:20px;line-height:20px;color:#000;">1</div>
<div class="t" style="left:1594.1px;top:692.00px;font-size:20px;line-height:20px;color:#000;letter-spacing:-0.6px;">Fields</div>
<div class="t" style="left:1716.4px;top:692.00px;font-size:20px;line-height:20px;color:#000;letter-spacing:-0.4px;">Emily</div>
<div class="t" style="left:1843px;top:692.00px;font-size:20px;line-height:20px;color:#000;letter-spacing:1.55px;">08/23/2017 12:00</div>
<div class="t" style="left:1360px;top:746.00px;font-size:19.5px;line-height:19.5px;color:#000;font-weight:bold;">Totals For 1</div>
<div class="t" style="left:1894.8px;width:40px;text-align:center;top:849.00px;font-size:20px;line-height:20px;color:#000;font-weight:bold;">2</div>
<div class="r" style="left:1338px;top:887px;width:686px;height:2.4px;background:#000;"></div>
<div class="t" style="left:1536px;width:40px;text-align:right;top:901.00px;font-size:20px;line-height:20px;color:#000;">2</div>
<div class="t" style="left:1594.1px;top:901.00px;font-size:20px;line-height:20px;color:#000;letter-spacing:-0.6px;">Smith</div>
<div class="t" style="left:1716.4px;top:901.00px;font-size:20px;line-height:20px;color:#000;letter-spacing:-0.4px;">Mary</div>
<div class="t" style="left:1843px;top:901.00px;font-size:20px;line-height:20px;color:#000;letter-spacing:1.55px;">08/23/2017 12:00</div>
<div class="t" style="left:1360px;top:957.00px;font-size:19.5px;line-height:19.5px;color:#000;font-weight:bold;">Totals For 2</div>
<div class="t" style="left:1893.2px;width:40px;text-align:center;top:1059.00px;font-size:20px;line-height:20px;color:#000;font-weight:bold;">3</div>
<svg class="r" style="left:1310px;top:1130px;" width="40" height="48" viewBox="0 0 40 48">
<path d="M7.5 39.5 L20 27.5" stroke="#9a5f4c" stroke-width="3.2" stroke-linecap="round"/>
<path d="M20 27.5 L23 24.5" stroke="#a0a0a8" stroke-width="2"/>
<circle cx="28.7" cy="17.7" r="9.3" fill="#c4eef9" stroke="#5a4a5a" stroke-width="1.6"/>
<circle cx="30.5" cy="15.8" r="2.8" fill="#fff"/>
</svg>
<svg class="r" style="left:1428px;top:1135px;" width="38" height="40" viewBox="0 0 38 40">
<rect x="4.2" y="4.2" width="29.5" height="31.5" fill="none" stroke="#3c6290" stroke-width="2.1"/>
<g fill="#3c6290"><rect x="8.5" y="9.3" width="20" height="1.9" rx="0.9"/><rect x="8.5" y="15.5" width="20" height="1.9" rx="0.9"/><rect x="8.5" y="21.8" width="20" height="1.9" rx="0.9"/><rect x="8.5" y="27.8" width="9" height="1.9" rx="0.9"/></g>
</svg>
<svg class="r" style="left:1745px;top:1136px;" width="42" height="42" viewBox="0 0 42 42">
<circle cx="17.6" cy="17" r="11" fill="none" stroke="#000" stroke-width="4"/>
<rect x="12" y="15.5" width="10.3" height="3" fill="#000"/>
<path d="M26 25.5 L34.5 34" stroke="#000" stroke-width="4.6" stroke-linecap="round"/>
</svg>
<div class="t" style="left:1800.7px;top:1149.00px;font-size:22.5px;line-height:22.5px;color:#2f43f2;letter-spacing:0.98px;">Zoom to default</div>
<svg class="r" style="left:1982px;top:1136px;" width="42" height="42" viewBox="0 0 42 42">
<circle cx="17.4" cy="17" r="11" fill="none" stroke="#000" stroke-width="4"/>
<rect x="12" y="15.5" width="10.6" height="3" fill="#000"/><rect x="15.8" y="11.5" width="3" height="10.6" fill="#000"/>
<path d="M25.8 25.5 L34.3 34" stroke="#000" stroke-width="4.6" stroke-linecap="round"/>
</svg>
</body></html>
